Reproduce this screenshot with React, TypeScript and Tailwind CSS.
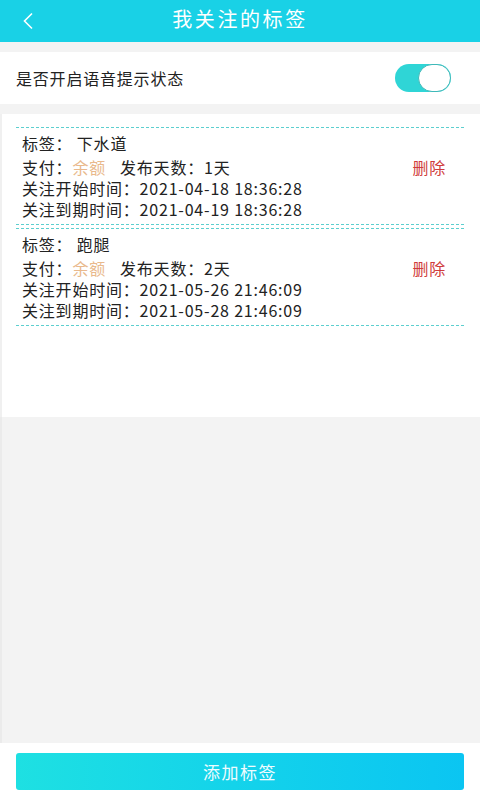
import { useState } from 'react';

type Tag = {
  name: string;
  days: number;
  start: string;
  end: string;
};

const tags: Tag[] = [
  { name: '下水道', days: 1, start: '2021-04-18 18:36:28', end: '2021-04-19 18:36:28' },
  { name: '跑腿', days: 2, start: '2021-05-26 21:46:09', end: '2021-05-28 21:46:09' },
];

function TagCard({ tag }: { tag: Tag }) {
  return (
    <div className="border-y border-dashed border-y-[#5ccfcf] pt-[5px] pb-[4px] pl-[6px] pr-[18px] mt-[3px] first:mt-0">
      <div className="leading-[21px] mb-[3px]">标签：&nbsp;{tag.name}</div>
      <div className="flex items-center justify-between leading-[21px]">
        <div>
          支付：<span className="text-[#e9b98c]">余额</span>
          <span className="ml-[14px]">发布天数：{tag.days}天</span>
        </div>
        <button className="text-[#cf3b3b] leading-[21px] tracking-[0.8px]">删除</button>
      </div>
      <div className="leading-[21px]">关注开始时间：{tag.start}</div>
      <div className="leading-[21px]">关注到期时间：{tag.end}</div>
    </div>
  );
}

export default function App() {
  const [voiceOn, setVoiceOn] = useState(true);

  return (
    <div
      className="w-[480px] h-[800px] flex flex-col bg-[#f3f3f3] text-[#222] text-[16px] tracking-[0.8px]"
      style={{ fontFamily: '"Noto Sans CJK SC", "Noto Sans", sans-serif' }}
    >
      {/* header */}
      <div className="h-[42px] bg-[#19d1e6] flex items-center relative shrink-0">
        <button className="absolute left-[17px] top-[9px] w-[22px] h-[24px] flex items-center justify-center">
          <svg width="14" height="18" viewBox="0 0 14 18" fill="none" stroke="white" strokeWidth="1.6">
            <path d="M11 1.5 L3.5 9 L11 16.5" />
          </svg>
        </button>
        <h1 className="flex-1 text-center text-white text-[20px] tracking-[2.6px] leading-[24px] -mt-[4px]">我关注的标签</h1>
      </div>

      <div className="h-[10px] shrink-0" />

      {/* voice switch */}
      <div className="h-[52px] bg-white flex items-center justify-between pl-[16px] pr-[29px] shrink-0">
        <span>是否开启语音提示状态</span>
        <button
          onClick={() => setVoiceOn(!voiceOn)}
          className={`w-[56px] h-[28px] rounded-full flex items-center ${voiceOn ? 'bg-[#2fd5d6] justify-end' : 'bg-[#ddd] justify-start'}`}
        >
          <span className="w-[33px] h-[28px] rounded-full bg-white border border-[#3fb8b8]" />
        </button>
      </div>

      <div className="h-[10px] shrink-0" />

      {/* list */}
      <div className="h-[303px] bg-white border-l-2 border-[#f0f0f0] pt-[13px] pl-[14px] pr-[16px] shrink-0">
        {tags.map((t) => (
          <TagCard key={t.name} tag={t} />
        ))}
      </div>

      <div className="flex-1 border-l-2 border-[#ebebeb]" />

      {/* bottom */}
      <div className="h-[57px] bg-white flex items-center px-[16px] shrink-0">
        <button className="w-full h-[37px] rounded-[3px] bg-gradient-to-r from-[#1ee0e2] to-[#0bc5f2] text-[#eefcff] text-[17px] tracking-[1.5px]">
          添加标签
        </button>
      </div>
    </div>
  );
}
